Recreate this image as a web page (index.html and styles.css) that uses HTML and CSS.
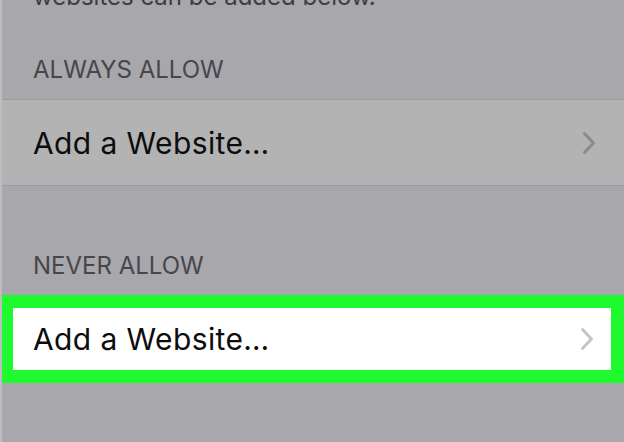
FILE: index.html
```html
<!DOCTYPE html>
<html lang="en">
<head>
<meta charset="UTF-8" />
<meta name="viewport" content="width=device-width, initial-scale=1" />
<title>Website Restrictions</title>
<link rel="stylesheet" href="styles.css">
</head>
<body>
  <div class="settings">
    <p class="note">websites can be added below.</p>

    <h3 class="section-header">ALWAYS ALLOW</h3>
    <div class="row">
      <span class="row-label">Add a Website…</span>
      <svg class="chevron" width="14" height="24" viewBox="0 0 14 24">
        <path d="M2.5 2.5 L11.5 12 L2.5 21.5" />
      </svg>
    </div>

    <h3 class="section-header never">NEVER ALLOW</h3>
    <div class="row highlight">
      <span class="row-label">Add a Website…</span>
      <svg class="chevron" width="14" height="24" viewBox="0 0 14 24">
        <path d="M2.5 2.5 L11.5 12 L2.5 21.5" />
      </svg>
    </div>
  </div>
</body>
</html>
```

FILE: styles.css
```css
html, body {
  margin: 0;
  padding: 0;
}
body {
  width: 624px;
  height: 442px;
  overflow: hidden;
  background: #a8a7ac;
  font-family: 'Inter', 'Liberation Sans', Arial, sans-serif;
  border-left: 2px solid #bdbdc1;
  box-sizing: border-box;
}
.settings {
  display: flex;
  flex-direction: column;
}
.note {
  margin: -18px 0 0;
  padding: 0 31px;
  font-size: 24px;
  line-height: 30px;
  color: #3d3d42;
}
.section-header {
  margin: 43px 0 14px;
  padding: 0 31px;
  font-size: 24px;
  line-height: 30px;
  font-weight: 400;
  color: #47464b;
}
.section-header.never {
  margin-top: 65px;
  margin-bottom: 14px;
}
.row {
  display: flex;
  align-items: center;
  justify-content: space-between;
  height: 87px;
  box-sizing: border-box;
  padding: 0 28px 0 31px;
  background: #b3b3b3;
  border-top: 1px solid #9b9a9f;
  border-bottom: 1px solid #9b9a9f;
}
.row-label {
  font-size: 30px;
  letter-spacing: 0.4px;
  color: #0d0d0d;
}
.chevron path {
  fill: none;
  stroke: #8a8a8c;
  stroke-width: 3;
  stroke-linecap: round;
  stroke-linejoin: round;
}
.row.highlight {
  height: 88px;
  margin-left: -2px;
  padding: 0 17px 0 20px;
  background: #fff;
  border: 13px solid #1efa2d;
}
.row.highlight .chevron path {
  stroke: #c5c5c9;
}
```
